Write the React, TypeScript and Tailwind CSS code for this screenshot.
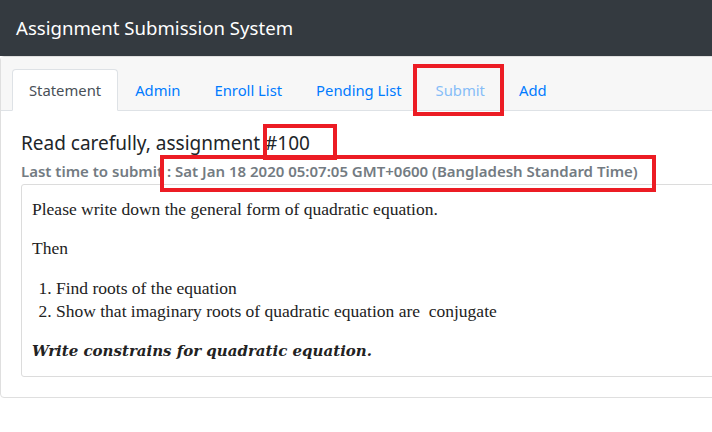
import React from 'react'

const tabs = [
  { label: 'Statement', active: true },
  { label: 'Admin' },
  { label: 'Enroll List' },
  { label: 'Pending List' },
  { label: 'Submit', muted: true },
  { label: 'Add' },
]

export default function App() {
  return (
    <div className="relative w-[712px] h-[432px] overflow-hidden bg-white" style={{ fontFamily: '"Noto Sans", "Open Sans", sans-serif' }}>
      {/* Navbar */}
      <div className="h-[56px] bg-[#343a40] flex items-center px-4">
        <span className="text-white text-[18.6px] leading-none">Assignment Submission System</span>
      </div>

      {/* Card */}
      <div className="w-[740px] border border-[#dfdfdf] rounded-[4px] mb-4">
        <div className="bg-[#f7f7f7] border-b border-[#dee2e6] pt-3 pl-[11px] flex">
          {tabs.map((t) => (
            <div
              key={t.label}
              className={`px-4 h-[42px] flex items-center text-[14.8px] -mb-px rounded-t-[4px] border ${
                t.active
                  ? 'bg-white border-[#dee2e6] border-b-white text-[#495057]'
                  : t.muted
                  ? 'border-transparent text-[#86bdf7]'
                  : 'border-transparent text-[#007bff]'
              }`}
            >
              {t.label}
            </div>
          ))}
        </div>

        <div className="px-5 pt-[19px] pb-5">
          <h2 className="text-[19px] leading-[26px] text-[#212529]">Read carefully, assignment #100</h2>
          <p className="text-[15px] leading-[22px] font-semibold text-[#737b82] mt-[4px]">
            Last time to submit : Sat Jan 18 2020 05:07:05 GMT+0600 (Bangladesh Standard Time)
          </p>
          <div
            className="mt-[2px] border border-[#dcdcdc] rounded-[3px] px-[10px] pt-[13px] pb-[13px] text-[#222] text-[17.5px] leading-[23px]"
            style={{ fontFamily: '"Liberation Serif", serif' }}
          >
            <p className="mb-[16px]">Please write down the general form of quadratic equation.</p>
            <p className="mb-[17px]">Then</p>
            <ol className="list-decimal pl-[24px] mb-[17px]">
              <li>Find roots of the equation</li>
              <li>Show that imaginary roots of quadratic equation are&nbsp; conjugate</li>
            </ol>
            <p className="font-bold italic text-[15px]" style={{ fontFamily: '"DejaVu Serif", serif' }}>
              Write constrains for quadratic equation.
            </p>
          </div>
        </div>
      </div>

      {/* Annotation boxes */}
      <div className="absolute left-[413px] top-[64px] w-[91px] h-[52px] border-[4px] border-[#ec1c24]" />
      <div className="absolute left-[263px] top-[124px] w-[74px] h-[36px] border-[4px] border-[#ec1c24]" />
      <div className="absolute left-[160px] top-[155px] w-[496px] h-[37px] border-[4px] border-[#ec1c24]" />
    </div>
  )
}
